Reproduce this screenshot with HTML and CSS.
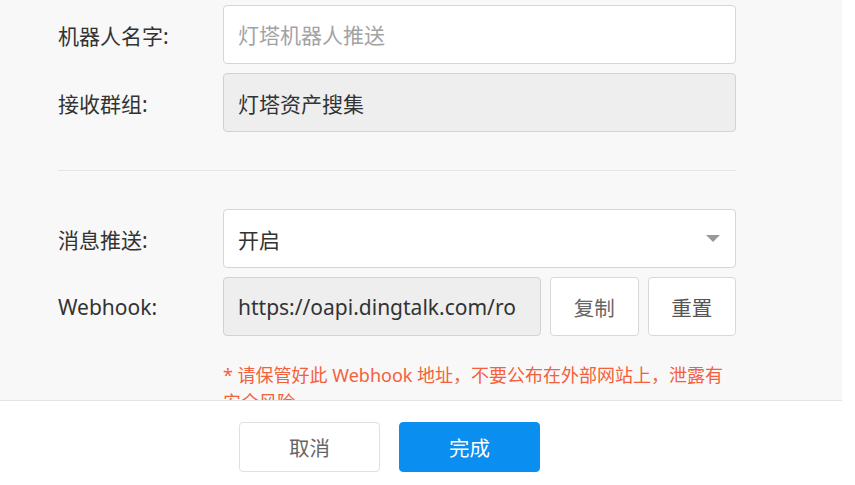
FILE: index.html
```html
<!DOCTYPE html>
<html>
	<head>
		<title>机器人设置</title>
		<link rel="stylesheet" href="styles.css">
	</head>
	<body>
		<div class="dialog">
			<div class="dialog-body">
				<div class="form-row">
					<label class="form-label">机器人名字:</label>
					<input class="form-input" type="text" placeholder="灯塔机器人推送">
				</div>
				<div class="form-row">
					<label class="form-label">接收群组:</label>
					<div class="form-input disabled">灯塔资产搜集</div>
				</div>
				<div class="divider"></div>
				<div class="form-row">
					<label class="form-label">消息推送:</label>
					<div class="form-input select">
						<span>开启</span>
						<span class="caret"></span>
					</div>
				</div>
				<div class="form-row">
					<label class="form-label">Webhook:</label>
					<div class="webhook">
						<div class="form-input disabled url"><span class="url-text">https://oapi.dingtalk.com/robot/send?access_token=</span></div>
						<button class="btn copy">复制</button>
						<button class="btn reset">重置</button>
					</div>
				</div>
				<p class="tip">* 请保管好此 Webhook 地址，不要公布在外部网站上，泄露有安全风险。</p>
			</div>
			<div class="dialog-footer">
				<button class="btn cancel">取消</button>
				<button class="btn primary">完成</button>
			</div>
		</div>
	</body>
</html>
```

FILE: styles.css
```css
html, body {padding: 0px; margin: 0px; background: #fff;}
body {font-family: "Noto Sans", "Noto Sans CJK SC", sans-serif; color: #333;}
.dialog {width: 842px;}
.dialog-body {height: 400px; overflow: hidden; background: #f8f8f8; padding: 5px 0 0 58px; box-sizing: border-box;}
.form-row {display: flex; align-items: center; margin-bottom: 9px;}
.form-label {width: 165px; font-size: 21px; color: #333;}
.form-input {box-sizing: border-box; width: 513px; height: 59px; border: 1px solid #d6d6d6; border-radius: 4px; background: #fff; padding: 0 14px; font-family: inherit; font-size: 21px; color: #333; display: flex; align-items: center; outline: none;}
.form-input::placeholder {color: #a3a3a3;}
.form-input.disabled {background: #eeeeee; border-color: #d2d2d2;}
.select {justify-content: space-between; padding-right: 15px;}
.caret {width: 0; height: 0; border-left: 7px solid transparent; border-right: 7px solid transparent; border-top: 7px solid #999;}
.divider {width: 678px; height: 1px; background: #e6e6e6; margin: 38px 0 38px;}
.webhook {display: flex; gap: 9px; width: 513px;}
.url {width: 318px; flex: none;}
.url-text {display: block; flex: none; width: 279px; white-space: nowrap; overflow: hidden; text-overflow: clip;}
.btn {box-sizing: border-box; border: 1px solid #d9d9d9; border-radius: 4px; background: #fff; font-family: inherit; font-size: 20.5px; color: #666; padding: 0;}
.copy, .reset {width: 89px; height: 59px;}
.reset {color: #555;}
.tip {margin: 26px 0 0 165px; width: 513px; font-size: 18px; line-height: 27px; color: #f4603c;}
.dialog-footer {border-top: 1px solid #e3e3e3; background: #fff; height: 84px; box-sizing: border-box; padding: 21px 0 0 239px; display: flex; gap: 19px; align-items: flex-start;}
.cancel {width: 141px; height: 50px; color: #666; border-color: #e0e0e0;}
.primary {width: 141px; height: 50px; background: #0a8ef0; border-color: #0a8ef0; color: #fff;}
```
